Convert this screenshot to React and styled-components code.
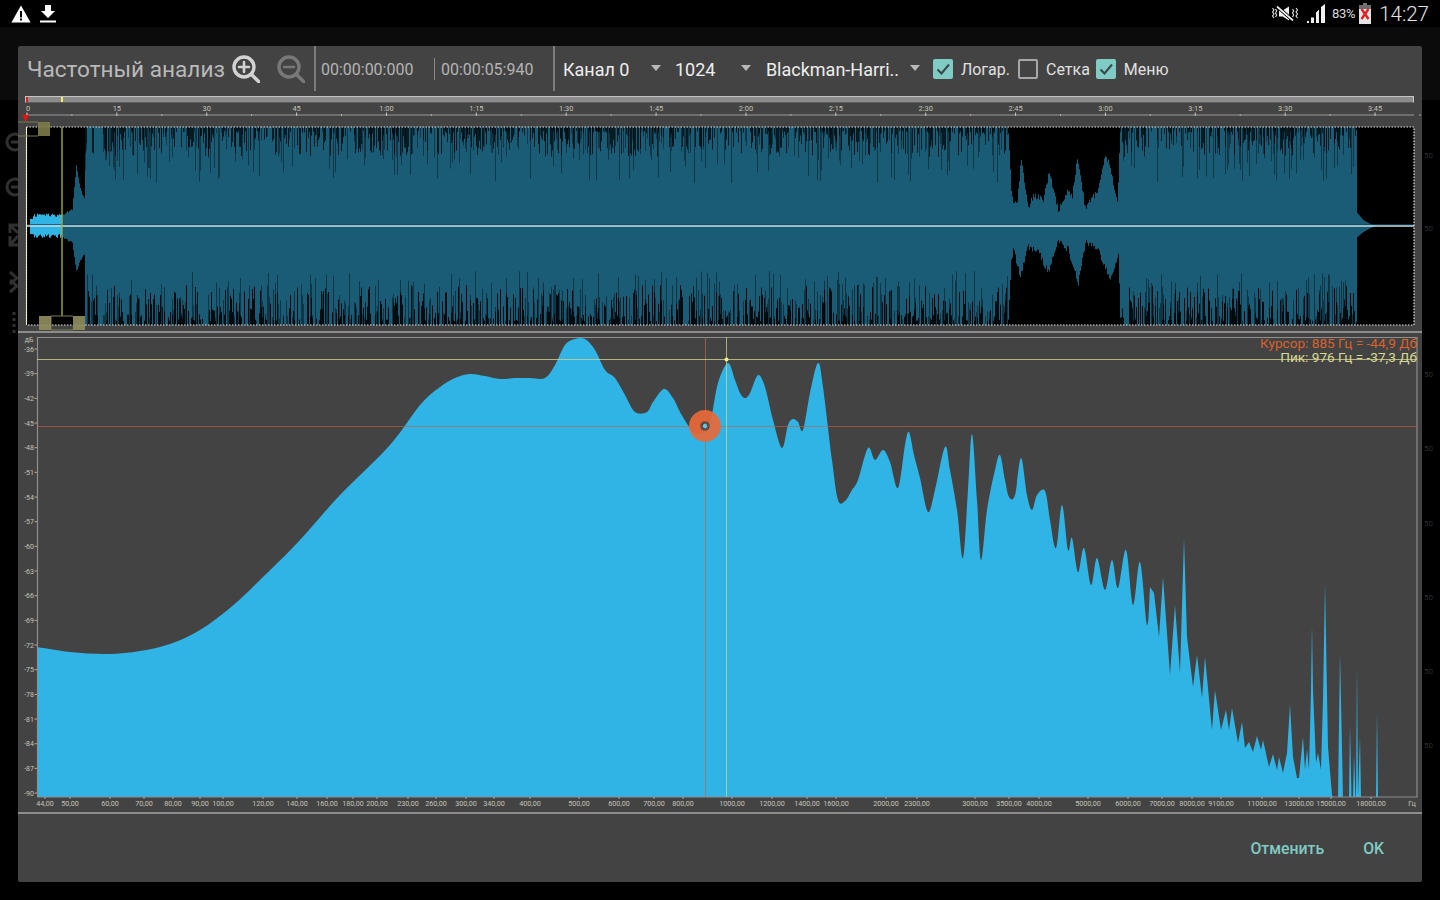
import React from "react";
import styled, { createGlobalStyle } from "styled-components";

const GlobalStyle = createGlobalStyle`
  html, body { margin: 0; padding: 0; background: #000; }
  body { font-family: Roboto, "Noto Sans", sans-serif; }
`;

// seeded so the waveform stays the same on every load
let seed = 12345;
const rnd = () => {
  seed = (seed * 1664525 + 1013904223) % 4294967296;
  return seed / 4294967296;
};

const lerpTable = (table, x) => {
  for (let i = 1; i < table.length; i++) {
    if (x <= table[i][0]) {
      const [x0, y0] = table[i - 1];
      const [x1, y1] = table[i];
      return y0 + ((y1 - y0) * (x - x0)) / (x1 - x0);
    }
  }
  return table[table.length - 1][1];
};

const quietTop = [[1008,130],[1011,190],[1013,203],[1017,200],[1021,157],[1023,173],[1028,207],[1033,195],[1043,198],[1049,170],[1058,210],[1067,192],[1072,196],[1077,158],[1085,207],[1097,190],[1105,153],[1110,167],[1117,203],[1120,130]];
const quietBottom = [[1008,322],[1011,262],[1013,250],[1020,277],[1028,247],[1038,252],[1048,273],[1058,240],[1068,250],[1078,283],[1085,243],[1098,250],[1110,280],[1118,253],[1120,320]];
const introTop = [[62,214],[72,208],[76,165],[80,188],[84,197],[85,127]];
const introBottom = [[62,238],[72,244],[76,272],[80,262],[84,255],[85,325]];
const outroTop = [[1356,130],[1357,213],[1363,220],[1370,224],[1377,226]];
const outroBottom = [[1356,322],[1357,237],[1363,232],[1370,228],[1377,226]];

const isComb = (x) => (x >= 85 && x < 1008) || (x >= 1120 && x < 1356);

const buildWave = () => {
  let d = "";
  for (let x = 62; x < 1378; x++) {
    let top = 127;
    let bottom = 325;
    if (x < 85) {
      top = lerpTable(introTop, x) + rnd() * 2;
      bottom = lerpTable(introBottom, x) - rnd() * 2;
    } else if (x >= 1008 && x < 1120) {
      top = lerpTable(quietTop, x) + rnd() * 7 - 3;
      bottom = lerpTable(quietBottom, x) - rnd() * 7 + 3;
    } else if (x >= 1356) {
      top = lerpTable(outroTop, x);
      bottom = lerpTable(outroBottom, x);
    }
    d += `M${x + 0.5} ${top.toFixed(1)}V${bottom.toFixed(1)}`;
  }
  return d;
};

// dark slits cut into the comb from the top and bottom edges
const buildSlits = (chance, from, reach, power) => {
  let d = "";
  for (let x = 85; x < 1356; x++) {
    if (!isComb(x) || rnd() > chance) continue;
    const to = from + Math.sign(reach) * 4 + Math.pow(rnd(), power) * reach;
    d += `M${x + 0.5} ${from}V${to.toFixed(1)}`;
  }
  return d;
};

const buildIntro = () => {
  let d = "";
  for (let x = 30; x < 62; x++) {
    const edge = x < 33 ? 219 : 213 + rnd() * 4;
    d += `M${x + 0.5} ${edge.toFixed(1)}V${(x < 33 ? 234 : 238 - rnd() * 4).toFixed(1)}`;
  }
  return d;
};

const smoothPts = [[37,647],[70,652],[108,654],[140,651],[170,644],[200,630],[230,608],[260,580],[300,540],[340,495],[390,445],[420,405],[440,387],[455,378],[470,374],[485,376],[500,379],[515,378],[530,378],[545,378],[555,365],[565,345],[575,339],[585,339],[595,350],[605,370],[615,378],[625,395],[635,412],[647,412],[653,402],[664,389],[673,398],[680,412],[690,428],[696,434],[702,432],[710,423],[718,383],[728,363],[735,380],[740,393],[745,398],[750,393],[758,375],[765,387],[773,420],[782,448],[788,425],[793,419],[798,422],[803,430],[810,393],[818,363],[823,387],[832,460],[838,500],[845,501],[852,490],[858,480],[868,448],[875,460],[883,450],[890,462],[898,488],[905,445],[909,432],[914,455],[920,478],[928,512],[935,490],[945,447],[950,470],[957,510],[963,558],[968,490],[972,434],[977,500],[981,560],[987,510],[995,470],[1000,455],[1005,480],[1009,497],[1015,495],[1021,458],[1027,495],[1032,510],[1037,495],[1045,491],[1050,520],[1056,548],[1062,505],[1068,550],[1072,538],[1078,572],[1084,548],[1091,585],[1097,558],[1105,590],[1112,560],[1118,588],[1126,550],[1133,605],[1140,562],[1147,625],[1150,587]];

const jaggedPts = [[1154,593],[1159,637],[1163,577],[1170,675],[1175,605],[1180,673],[1184,538],[1187,637],[1193,687],[1197,655],[1202,698],[1205,657],[1212,730],[1215,690],[1221,730],[1226,710],[1229,730],[1232,708],[1238,743],[1242,722],[1245,748],[1249,742],[1253,752],[1257,736],[1261,750],[1263,740],[1269,767],[1273,754],[1277,770],[1279,757],[1283,773],[1287,753],[1290,705],[1293,757],[1297,778],[1299,778],[1303,737],[1305,770],[1307,749],[1309,770],[1311,690],[1312,625],[1313,690],[1316,763],[1318,753],[1321,770],[1323,700],[1325,583],[1326,640],[1328,747],[1332,795],[1333,797]];

const smoothPath = (pts) => {
  let d = `M${pts[0][0]} ${pts[0][1]}`;
  for (let i = 0; i < pts.length - 1; i++) {
    const p0 = pts[Math.max(i - 1, 0)];
    const p1 = pts[i];
    const p2 = pts[i + 1];
    const p3 = pts[Math.min(i + 2, pts.length - 1)];
    const c1x = p1[0] + (p2[0] - p0[0]) / 6;
    const c1y = p1[1] + (p2[1] - p0[1]) / 6;
    const c2x = p2[0] - (p3[0] - p1[0]) / 6;
    const c2y = p2[1] - (p3[1] - p1[1]) / 6;
    d += `C${c1x.toFixed(1)} ${c1y.toFixed(1)} ${c2x.toFixed(1)} ${c2y.toFixed(1)} ${p2[0]} ${p2[1]}`;
  }
  return d;
};

const spectrumPath =
  smoothPath(smoothPts) +
  jaggedPts.map(([x, y]) => `L${x} ${y}`).join("") +
  "L37 797Z";

const spikes = [
  [1338, 1340, 653, 1343],
  [1349, 1350, 725, 1351.5],
  [1353, 1354, 755, 1355.5],
  [1356, 1357, 667, 1358],
  [1358, 1360, 737, 1361],
  [1376, 1377, 712, 1378],
];

const rulerMarks = ["0","15","30","45","1:00","1:15","1:30","1:45","2:00","2:15","2:30","2:45","3:00","3:15","3:30","3:45"];
const dbMarks = ["-36","-39","-42","-45","-48","-51","-54","-57","-60","-63","-66","-69","-72","-75","-78","-81","-84","-87","-90"];
const freqMarks = [[45,"44,00"],[70,"50,00"],[110,"60,00"],[144,"70,00"],[173,"80,00"],[200,"90,00"],[223,"100,00"],[263,"120,00"],[297,"140,00"],[327,"160,00"],[353,"180,00"],[377,"200,00"],[408,"230,00"],[436,"260,00"],[466,"300,00"],[494,"340,00"],[530,"400,00"],[579,"500,00"],[619,"600,00"],[654,"700,00"],[683,"800,00"],[732,"1000,00"],[772,"1200,00"],[807,"1400,00"],[836,"1600,00"],[886,"2000,00"],[917,"2300,00"],[975,"3000,00"],[1009,"3500,00"],[1039,"4000,00"],[1088,"5000,00"],[1128,"6000,00"],[1162,"7000,00"],[1192,"8000,00"],[1221,"9100,00"],[1262,"11000,00"],[1299,"13000,00"],[1331,"15000,00"],[1371,"18000,00"]];
const backdropMarks = [156, 229, 375, 449, 524, 598, 672, 746];

const waveBody = buildWave();
const waveIntro = buildIntro();
const topFaint = buildSlits(0.32, 127, 52, 1.5);
const topStrong = buildSlits(0.55, 127, 26, 1.6);
const bottomFaint = buildSlits(0.4, 325, -50, 1.3);
const bottomStrong = buildSlits(0.55, 325, -36, 1.5);

export default function App() {
  return (
    <Screen>
      <GlobalStyle />
      <DimBar />
      <BackdropIcons width="18" height="220" viewBox="0 0 18 220">
        <circle cx="15" cy="22" r="8" />
        <path d="M11 22h8" />
        <circle cx="15" cy="67" r="8" />
        <path d="M11 67h8" />
        <path d="M10 125l8-9M10 116v9h8M10 105l8 8M10 113v-8h8" />
        <path d="M10 160l7 6-7 6M10 152l7 6-7 6" />
        <path d="M14 192v3M14 198v3M14 204v3M14 210v3" />
      </BackdropIcons>
      {backdropMarks.map((y) => (
        <BackdropMark key={y} style={{ top: y - 5 }}>50</BackdropMark>
      ))}

      <StatusBar>
        <StatusGroup>
          <svg width="20" height="18" viewBox="0 0 20 18">
            <path d="M10 0.5L19.6 17.5H0.4Z" fill="#fff" />
            <path d="M9 6h2v6.5H9zM9 13.6h2v2H9z" fill="#000" />
          </svg>
          <svg width="16" height="18" viewBox="0 0 16 18">
            <path d="M5 0h6v6h4l-7 7-7-7h4z" fill="#fff" />
            <path d="M0 15.5h16v2H0z" fill="#fff" />
          </svg>
        </StatusGroup>
        <StatusGroup>
          <svg width="27" height="15" viewBox="0 0 27 15" fill="none">
            <path d="M8 4.5h3.5L18 0.5v14l-6.5-4H8z" fill="#f0f0f0" />
            <path d="M6 0.5l16 14" stroke="#000" strokeWidth="3.4" />
            <path d="M6 0.5l16 14" stroke="#f0f0f0" strokeWidth="1.7" />
            <path d="M1.5 2l1.5 2-1.5 2 1.5 2-1.5 2 1.5 2M4.5 3l1.2 2-1.2 2 1.2 2-1.2 2" stroke="#e4e4e4" strokeWidth="1.1" />
            <path d="M21.5 3l1.2 2-1.2 2 1.2 2-1.2 2M25 2l1.5 2-1.5 2 1.5 2-1.5 2 1.5 2" stroke="#e4e4e4" strokeWidth="1.1" />
          </svg>
          <svg width="18" height="19" viewBox="0 0 18 19">
            <path d="M0 17h2v2H0zM4 13.5h3V19H4zM9 8.5l3-3V19H9zM14 3l4-3v19h-4z" fill="#f0f0f0" />
          </svg>
          <BatteryText>83%</BatteryText>
          <svg width="12" height="21" viewBox="0 0 12 21">
            <path d="M4 0h4v2H4z" fill="#777" />
            <path d="M0 2h12v19H0z" fill="#e4e4e4" />
            <path d="M0 2h12v4H0z" fill="#6e6e6e" />
            <path d="M2.5 6l7 10M9.5 6l-7 10" stroke="#e02020" strokeWidth="2.4" />
          </svg>
          <Clock>14:27</Clock>
        </StatusGroup>
      </StatusBar>

      <Dialog>
        <Toolbar>
          <Title>Частотный анализ</Title>
          <ZoomButton $tone="#d2d2d2" $gap={7}>
            <path d="M20 20l7 7" />
            <circle cx="12" cy="12" r="10" />
            <path d="M7 12h10M12 7v10" strokeWidth="2.6" />
          </ZoomButton>
          <ZoomButton $tone="#787878" $gap={17}>
            <path d="M20 20l7 7" />
            <circle cx="12" cy="12" r="10" />
            <path d="M7 12h10" strokeWidth="2.6" />
          </ZoomButton>
          <ToolbarRule $gap={9} />
          <TimeLabel $gap={5}>00:00:00:000</TimeLabel>
          <TimeRule $gap={21} />
          <TimeLabel $gap={6}>00:00:05:940</TimeLabel>
          <ToolbarRule $gap={20} />
          <Spinner $width={98} $gap={8}>Канал 0<Caret /></Spinner>
          <Spinner $width={76} $gap={14}>1024<Caret /></Spinner>
          <Spinner $width={154} $gap={15}>Blackman-Harri..<Caret /></Spinner>
          <CheckRow $gap={13}>
            <CheckBox $on><CheckMark /></CheckBox>
            <CheckLabel>Логар.</CheckLabel>
          </CheckRow>
          <CheckRow $gap={8}>
            <CheckBox />
            <CheckLabel>Сетка</CheckLabel>
          </CheckRow>
          <CheckRow $gap={6}>
            <CheckBox $on><CheckMark /></CheckBox>
            <CheckLabel>Меню</CheckLabel>
          </CheckRow>
        </Toolbar>

        <SeekBar>
          <SeekMark $at={0} $tone="#e02020" />
          <SeekMark $at={35} $tone="#f0f060" />
        </SeekBar>

        <Chart width="1404" height="228" viewBox="18 103 1404 228">
          <path d="M26 115H1414" stroke="#9a9a9a" strokeWidth="1" />
          {rulerMarks.map((label, i) => {
            const x = 27 + i * 89.87;
            return (
              <g key={label}>
                <path d={`M${x} 112.5V116`} stroke="#c8c8c8" />
                <path d={`M${x + 44.9} 114V116`} stroke="#aaa" />
                <AxisText x={i === 0 ? x + 1 : x} y="110.5" fontSize="7.4" textAnchor="middle">{label}</AxisText>
              </g>
            );
          })}
          <path d="M22 115H29L25.5 122Z" fill="#e81010" />

          <rect x="26" y="127" width="1388" height="198" fill="#000" />
          <path d={waveBody} stroke="#1a5b76" strokeWidth="1" fill="none" />
          <path d={topFaint} stroke="#000" strokeOpacity="0.38" fill="none" />
          <path d={topStrong} stroke="#000" strokeOpacity="0.7" fill="none" />
          <path d={bottomFaint} stroke="#000" strokeOpacity="0.4" fill="none" />
          <path d={bottomStrong} stroke="#000" strokeOpacity="0.85" fill="none" />
          <path d={waveIntro} stroke="#30b4e6" strokeWidth="1" fill="none" />
          <path d="M26 224.8H1414" stroke="#0e4660" strokeWidth="1" />
          <path d="M26 226H1414" stroke="#c8dde4" strokeWidth="1.5" />
          <rect x="26.5" y="127" width="1387.5" height="198" fill="none" stroke="#e8e8e8" strokeWidth="1.2" strokeDasharray="1.5 1.5" />
          <path d="M26.5 127V325" stroke="#f4f4b0" strokeWidth="1" strokeDasharray="2 1" />
          <path d="M62 127V316" stroke="#a8a83c" strokeWidth="1.4" />
          <path d="M18 122H38M18 136H38M51 316V330M51 316H73M51 330H73" stroke="#7a7a50" strokeWidth="1" fill="none" />
          <rect x="38" y="122" width="12" height="14" fill="#7c7c48" opacity="0.9" />
          <rect x="39" y="316" width="12" height="14" fill="#8f8f5e" opacity="0.9" />
          <rect x="73" y="316" width="12" height="14" fill="#8f8f5e" opacity="0.9" />
        </Chart>

        <Rule />

        <Chart width="1404" height="479" viewBox="18 333 1404 479">
          <path d={spectrumPath} fill="#30b4e6" />
          {spikes.map(([a, b, y, c]) => (
            <path key={a} d={`M${a} 797L${b} ${y}L${c} 797Z`} fill="#30b4e6" />
          ))}
          <path d="M37.5 797V337.5H1417V797H37" fill="none" stroke="#8e8e8e" strokeWidth="1.2" />

          <path d="M37 426.5H1417" stroke="#c8613a" strokeWidth="1" opacity="0.6" />
          <path d="M705.5 337V797" stroke="#b86a4a" strokeWidth="1" opacity="0.7" />
          <path d="M37 359.5H1417" stroke="#d0d090" strokeWidth="1" opacity="0.8" />
          <path d="M726.5 337V797" stroke="#d8d890" strokeWidth="1" opacity="0.7" />
          <circle cx="726.5" cy="359.5" r="2" fill="#f0f090" />
          <path fillRule="evenodd" d="M705 410a16 16 0 1 0 0.01 0ZM705 422.5a3.5 3.5 0 1 1-0.01 0Z" fill="#e8693a" opacity="0.92" />
          <circle cx="705" cy="426" r="4" fill="none" stroke="#5a4a44" strokeWidth="1.6" />
          <circle cx="705" cy="426" r="2.2" fill="#6cc4e4" />

          <AxisText x="29" y="342" fontSize="7" textAnchor="middle">дБ</AxisText>
          {dbMarks.map((label, i) => {
            const y = 349 + i * 24.67;
            return (
              <g key={label}>
                <AxisText x="34" y={y + 2.5} fontSize="7" textAnchor="end">{label}</AxisText>
                <path d={`M34.5 ${y}H37`} stroke="#aaa" />
              </g>
            );
          })}
          {freqMarks.map(([x, label]) => (
            <g key={label}>
              <path d={`M${x} 797V799`} stroke="#aaa" />
              <AxisText x={x} y="805.5" fontSize="7.2" textAnchor="middle">{label}</AxisText>
            </g>
          ))}
          <AxisText x="1412" y="806" fontSize="7.2" textAnchor="middle">Гц</AxisText>

          <ReadoutText x="1417" y="348" fill="#d8622e" textAnchor="end">Курсор: 885 Гц = -44,9 Дб</ReadoutText>
          <ReadoutText x="1417" y="361.5" fill="#d8d88e" textAnchor="end">Пик: 976 Гц = -37,3 Дб</ReadoutText>
        </Chart>

        <Rule />

        <ButtonBar>
          <FlatButton>Отменить</FlatButton>
          <FlatButton>OK</FlatButton>
        </ButtonBar>
      </Dialog>
    </Screen>
  );
}

function CheckMark() {
  return (
    <svg width="20" height="20" viewBox="0 0 20 20" fill="none">
      <path d="M4.5 10.5l4 4 7.5-9" stroke="#37474a" strokeWidth="2" />
    </svg>
  );
}

const Screen = styled.div`
  position: relative;
  width: 1440px;
  height: 900px;
  overflow: hidden;
  background: #000;
  display: flex;
  flex-direction: column;
`;

const DimBar = styled.div`
  position: absolute;
  top: 27px;
  left: 0;
  right: 0;
  height: 73px;
  background: #0b0b0b;
`;

const BackdropIcons = styled.svg`
  position: absolute;
  top: 120px;
  left: 0;
  fill: none;
  stroke: #303030;
  stroke-width: 3;
`;

const BackdropMark = styled.span`
  position: absolute;
  left: 1424px;
  font-size: 8px;
  color: #2e2e2e;
`;

const StatusBar = styled.div`
  position: relative;
  height: 27px;
  flex: none;
  display: flex;
  align-items: center;
  justify-content: space-between;
  padding: 0 11px;
  background: #000;
`;

const StatusGroup = styled.div`
  display: flex;
  align-items: center;
  gap: 9px;
`;

const BatteryText = styled.span`
  font-size: 13px;
  color: #dcdcdc;
  letter-spacing: -0.3px;
  margin: 0 -5px 0 -2px;
`;

const Clock = styled.span`
  font-size: 20.5px;
  font-weight: 300;
  color: #e4e4e4;
  margin: 1px 0 0 -1px;
`;

const Dialog = styled.div`
  position: relative;
  margin: 19px 18px 0;
  height: 836px;
  background: #434343;
  border-radius: 2px;
  display: flex;
  flex-direction: column;
`;

const Toolbar = styled.div`
  box-sizing: border-box;
  height: 50px;
  flex: none;
  display: flex;
  align-items: stretch;
  padding: 0 0 4px 9px;
`;

const Title = styled.div`
  align-self: center;
  font-size: 22.6px;
  color: #b9b9b9;
  white-space: nowrap;
`;

const ZoomButton = styled.svg.attrs({ width: 28, height: 28, viewBox: "0 0 28 28", fill: "none" })`
  align-self: center;
  margin-left: ${(p) => p.$gap}px;
  flex: none;
  stroke: ${(p) => p.$tone};
  stroke-width: 3.4;
  stroke-linecap: round;
`;

const ToolbarRule = styled.div`
  width: 2px;
  height: 45px;
  margin-left: ${(p) => p.$gap}px;
  background: #7d7d7d;
  flex: none;
`;

const TimeRule = styled.div`
  width: 1px;
  height: 22px;
  align-self: center;
  margin-left: ${(p) => p.$gap}px;
  background: #8a8a8a;
  flex: none;
`;

const TimeLabel = styled.div`
  align-self: center;
  font-size: 16px;
  color: #b4b4b4;
  white-space: nowrap;
  margin-left: ${(p) => p.$gap}px;
  width: 92px;
`;

const Spinner = styled.div`
  position: relative;
  align-self: center;
  width: ${(p) => p.$width}px;
  margin-left: ${(p) => p.$gap}px;
  font-size: 18px;
  color: #eeeeee;
  white-space: nowrap;
  display: flex;
  align-items: center;
  justify-content: space-between;
  flex: none;
`;

const Caret = styled.span`
  width: 0;
  height: 0;
  border-left: 5.5px solid transparent;
  border-right: 5.5px solid transparent;
  border-top: 6px solid #b8b8b8;
  margin-top: -3px;
`;

const CheckRow = styled.div`
  align-self: center;
  display: flex;
  align-items: center;
  gap: 8px;
  margin-left: ${(p) => p.$gap}px;
`;

const CheckBox = styled.span`
  box-sizing: border-box;
  width: 20px;
  height: 20px;
  border-radius: 2px;
  background: ${(p) => (p.$on ? "#80cbc4" : "transparent")};
  border: ${(p) => (p.$on ? "none" : "2px solid #a8a8a8")};
  display: block;
  flex: none;
  svg { display: block; }
`;

const CheckLabel = styled.span`
  font-size: 16px;
  color: #e0e0e0;
`;

const SeekBar = styled.div`
  position: relative;
  box-sizing: border-box;
  height: 7px;
  margin: 0 8px 0 7px;
  background: #8c8c8c;
  border: 1px solid #c4c4c4;
  border-bottom-color: #5c5c5c;
  flex: none;
`;

const SeekMark = styled.span`
  position: absolute;
  top: 0;
  bottom: 0;
  left: ${(p) => p.$at}px;
  width: 2px;
  background: ${(p) => p.$tone};
`;

const Chart = styled.svg`
  display: block;
  flex: none;
`;

const AxisText = styled.text`
  fill: #c4c4b8;
  font-family: Roboto, sans-serif;
`;

const ReadoutText = styled.text`
  font-family: Roboto, sans-serif;
  font-size: 13.6px;
`;

const Rule = styled.div`
  height: 2px;
  background: #8c8c8c;
  flex: none;
`;

const ButtonBar = styled.div`
  flex: 1;
  display: flex;
  align-items: center;
  justify-content: flex-end;
  gap: 39px;
  padding: 0 38px 0 0;
`;

const FlatButton = styled.div`
  font-size: 15.8px;
  font-weight: 500;
  color: #80cbc4;
`;
